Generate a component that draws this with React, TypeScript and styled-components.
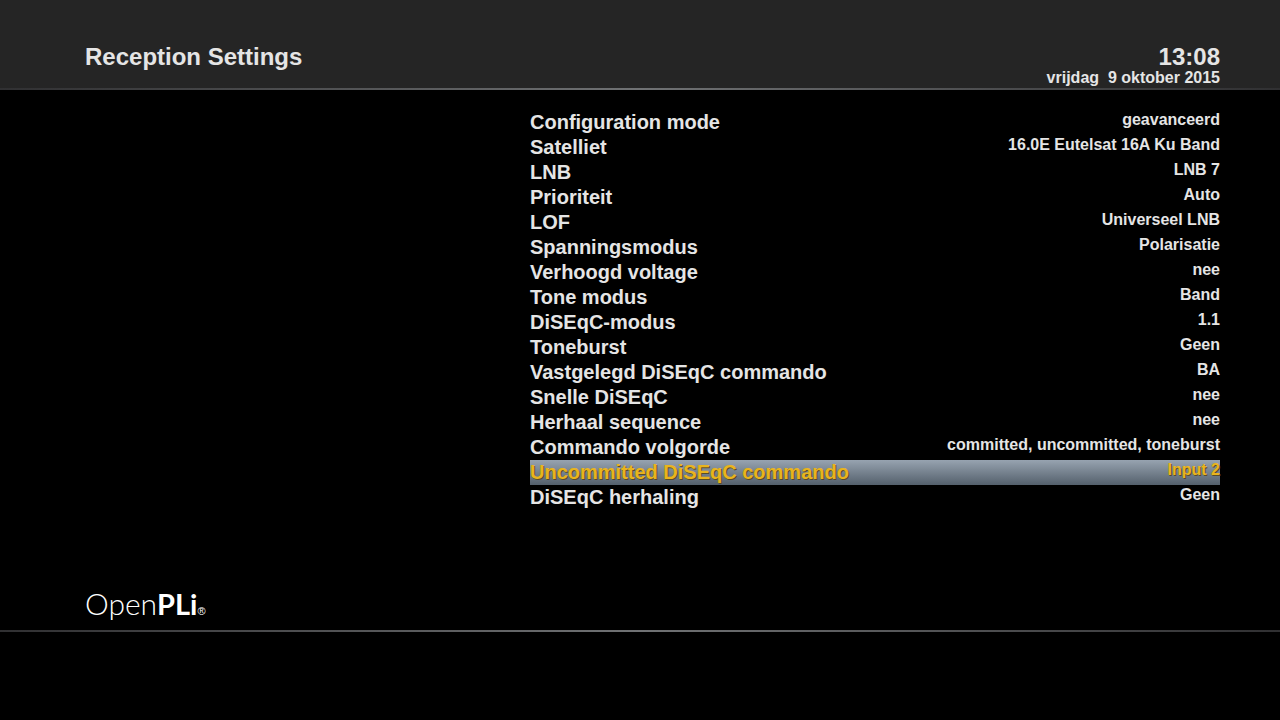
import React from "react";
import styled, { createGlobalStyle } from "styled-components";

const GlobalStyle = createGlobalStyle`
  * { box-sizing: border-box; }
  body {
    margin: 0;
    background: #000;
    color: #e5e5e5;
    font-family: "Liberation Sans", Arial, sans-serif;
    font-weight: 700;
  }
`;

const Screen = styled.div`
  min-height: 100vh;
  display: flex;
  flex-direction: column;
`;

const Header = styled.header`
  display: flex;
  justify-content: space-between;
  align-items: flex-start;
  height: 88px;
  padding: 43px 60px 0 85px;
  background: #252525;
`;

const Title = styled.h1`
  margin: 0;
  font-size: 24px;
  line-height: 28px;
`;

const Clock = styled.div`
  text-align: right;
`;

const Time = styled.time`
  display: block;
  font-size: 24px;
  line-height: 28px;
`;

const DateLine = styled.time`
  display: block;
  font-size: 16px;
  line-height: 13px;
  white-space: pre;
`;

const Divider = styled.div`
  flex: none;
  height: 2px;
  background: linear-gradient(to right, #303032, #707274 50%, #303032);
`;

const Main = styled.main`
  flex: 1;
  display: flex;
  justify-content: flex-end;
  padding: 20px 60px 0;
`;

const Settings = styled.dl`
  flex: 0 1 690px;
  margin: 0;
`;

const Row = styled.div<{ $selected: boolean }>`
  display: flex;
  justify-content: space-between;
  height: 25px;
  color: ${(p) => (p.$selected ? "#e9b41c" : "inherit")};
  background: ${(p) => (p.$selected ? "linear-gradient(#97a3b0, #54606c)" : "none")};
  text-shadow: ${(p) => (p.$selected ? "1px 1px 0 #5a4c28" : "none")};
`;

const Label = styled.dt`
  font-size: 20px;
  line-height: 24px;
`;

const Value = styled.dd`
  margin: 0;
  font-size: 16px;
  line-height: 19px;
`;

const Footer = styled.footer`
  display: flex;
  padding: 0 85px 8px;
`;

const Logo = styled.div`
  display: flex;
  align-items: baseline;
  color: #fff;
  font-family: Lato, sans-serif;
  font-size: 30px;
  font-weight: 300;
  line-height: 36px;
`;

const LogoStrong = styled.strong`
  font-size: 29px;
  font-weight: 700;
`;

const Registered = styled.span`
  font-family: "Liberation Sans", Arial, sans-serif;
  font-size: 11px;
  font-weight: 400;
  line-height: 12px;
`;

const BottomBar = styled.div`
  height: 88px;
`;

const settings: [string, string][] = [
  ["Configuration mode", "geavanceerd"],
  ["Satelliet", "16.0E Eutelsat 16A Ku Band"],
  ["LNB", "LNB 7"],
  ["Prioriteit", "Auto"],
  ["LOF", "Universeel LNB"],
  ["Spanningsmodus", "Polarisatie"],
  ["Verhoogd voltage", "nee"],
  ["Tone modus", "Band"],
  ["DiSEqC-modus", "1.1"],
  ["Toneburst", "Geen"],
  ["Vastgelegd DiSEqC commando", "BA"],
  ["Snelle DiSEqC", "nee"],
  ["Herhaal sequence", "nee"],
  ["Commando volgorde", "committed, uncommitted, toneburst"],
  ["Uncommitted DiSEqC commando", "Input 2"],
  ["DiSEqC herhaling", "Geen"],
];

const selected = "Uncommitted DiSEqC commando";

export default function App() {
  return (
    <Screen>
      <GlobalStyle />
      <Header>
        <Title>Reception Settings</Title>
        <Clock>
          <Time dateTime="13:08">13:08</Time>
          <DateLine dateTime="2015-10-09">{"vrijdag  9 oktober 2015"}</DateLine>
        </Clock>
      </Header>
      <Divider />
      <Main>
        <Settings>
          {settings.map(([label, value]) => (
            <Row key={label} $selected={label === selected}>
              <Label>{label}</Label>
              <Value>{value}</Value>
            </Row>
          ))}
        </Settings>
      </Main>
      <Footer>
        <Logo>
          <span>Open</span>
          <LogoStrong>PLi</LogoStrong>
          <Registered>®</Registered>
        </Logo>
      </Footer>
      <Divider />
      <BottomBar />
    </Screen>
  );
}
